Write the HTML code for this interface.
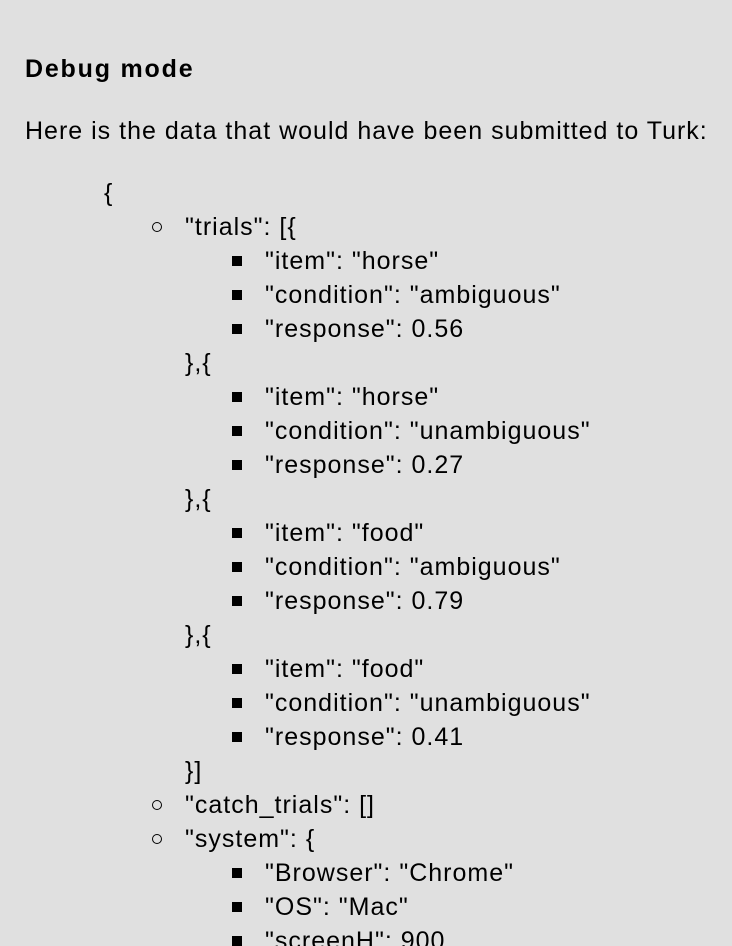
<!DOCTYPE html>
<html><head><meta charset="utf-8"><style>
html,body{margin:0;padding:0;background:#e0e0e0;width:732px;height:946px;overflow:hidden;position:relative;font-family:"Liberation Sans",Helvetica,Arial,sans-serif;color:#000;}
.l{position:absolute;font-size:25px;line-height:34px;white-space:nowrap;letter-spacing:1px;}
.b{font-weight:bold;letter-spacing:1.8px;}
.c{position:absolute;width:10px;height:10px;border:1.5px solid #000;border-radius:50%;box-sizing:border-box;}
.s{position:absolute;width:10px;height:10px;background:#000;}
</style></head><body>
<div class="l b" style="left:25px;top:52px">Debug mode</div>
<div class="l" style="left:25px;top:114px">Here is the data that would have been submitted to Turk:</div>
<div class="l" style="left:104px;top:176px">{</div>

<div class="c" style="left:152px;top:222px"></div><div class="l" style="left:185px;top:210px">"trials": [{</div>
<div class="s" style="left:232px;top:256px"></div><div class="l" style="left:265px;top:244px">"item": "horse"</div>
<div class="s" style="left:232px;top:290px"></div><div class="l" style="left:265px;top:278px">"condition": "ambiguous"</div>
<div class="s" style="left:232px;top:324px"></div><div class="l" style="left:265px;top:312px">"response": 0.56</div>
<div class="l" style="left:185px;top:346px">},{</div>
<div class="s" style="left:232px;top:392px"></div><div class="l" style="left:265px;top:380px">"item": "horse"</div>
<div class="s" style="left:232px;top:426px"></div><div class="l" style="left:265px;top:414px">"condition": "unambiguous"</div>
<div class="s" style="left:232px;top:460px"></div><div class="l" style="left:265px;top:448px">"response": 0.27</div>
<div class="l" style="left:185px;top:482px">},{</div>
<div class="s" style="left:232px;top:528px"></div><div class="l" style="left:265px;top:516px">"item": "food"</div>
<div class="s" style="left:232px;top:562px"></div><div class="l" style="left:265px;top:550px">"condition": "ambiguous"</div>
<div class="s" style="left:232px;top:596px"></div><div class="l" style="left:265px;top:584px">"response": 0.79</div>
<div class="l" style="left:185px;top:618px">},{</div>
<div class="s" style="left:232px;top:664px"></div><div class="l" style="left:265px;top:652px">"item": "food"</div>
<div class="s" style="left:232px;top:698px"></div><div class="l" style="left:265px;top:686px">"condition": "unambiguous"</div>
<div class="s" style="left:232px;top:732px"></div><div class="l" style="left:265px;top:720px">"response": 0.41</div>
<div class="l" style="left:185px;top:754px">}]</div>
<div class="c" style="left:152px;top:800px"></div><div class="l" style="left:185px;top:788px">"catch_trials": []</div>
<div class="c" style="left:152px;top:834px"></div><div class="l" style="left:185px;top:822px">"system": {</div>
<div class="s" style="left:232px;top:868px"></div><div class="l" style="left:265px;top:856px">"Browser": "Chrome"</div>
<div class="s" style="left:232px;top:902px"></div><div class="l" style="left:265px;top:890px">"OS": "Mac"</div>
<div class="s" style="left:232px;top:936px"></div><div class="l" style="left:265px;top:924px">"screenH": 900</div>
</body></html>
